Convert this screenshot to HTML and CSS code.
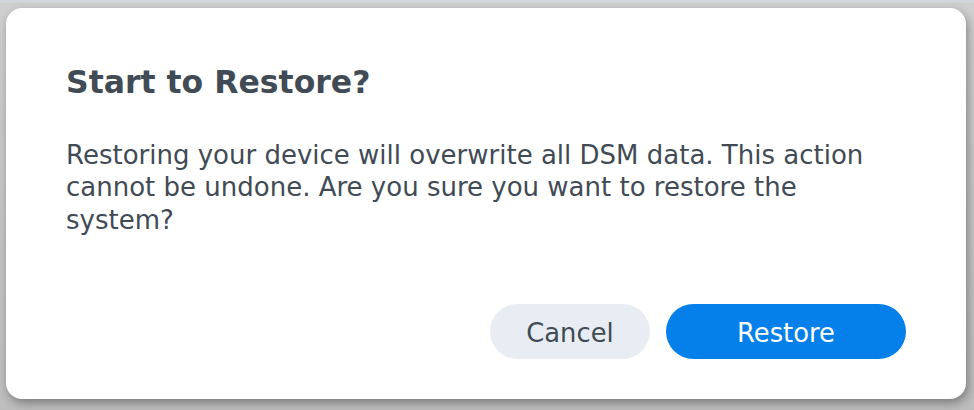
FILE: index.html
```html
<!DOCTYPE html>
<html>
<head>
<meta charset="utf-8">
<link rel="stylesheet" href="styles.css">
</head>
<body>
<div class="backdrop">
  <div class="dialog">
    <h1 class="title">Start to Restore?</h1>
    <p class="message">Restoring your device will overwrite all DSM data. This action cannot be undone. Are you sure you want to restore the system?</p>
    <div class="actions">
      <button class="btn btn-secondary">Cancel</button>
      <button class="btn btn-primary">Restore</button>
    </div>
  </div>
</div>
</body>
</html>
```
FILE: styles.css
```css
html, body {
  margin: 0;
  padding: 0;
  width: 974px;
  height: 410px;
  overflow: hidden;
}
body {
  background: linear-gradient(to bottom, #d3d7dd 0px, #d3d7dd 2px, #cfcfcf 3px, #bdbdbd 100%);
  font-family: "DejaVu Sans", Verdana, sans-serif;
}
.backdrop {
  padding: 8px 8px 11px 6px;
  box-sizing: border-box;
  height: 410px;
}
.dialog {
  width: 960px;
  height: 391px;
  box-sizing: border-box;
  background: #fff;
  border-radius: 16px;
  box-shadow: 2px 4px 10px rgba(0,0,0,0.35);
  padding: 54px 60px 40px 60px;
  display: flex;
  flex-direction: column;
}
.title {
  margin: 0;
  font-size: 31.5px;
  font-weight: bold;
  color: #414b55;
  line-height: 41px;
}
.message {
  margin: 35.6px 0 0 0;
  font-size: 26px;
  line-height: 32.7px;
  color: #414b55;
}
.actions {
  margin-top: auto;
  display: flex;
  justify-content: flex-end;
  gap: 16px;
}
.btn {
  height: 55px;
  border: none;
  border-radius: 28px;
  font-family: "DejaVu Sans", Verdana, sans-serif;
  font-size: 25.8px;
  padding: 3px 0 0 0;
}
.btn-secondary {
  width: 160px;
  background: #e8edf3;
  color: #414b55;
}
.btn-primary {
  width: 240px;
  background: #057fea;
  color: #fff;
}
```
